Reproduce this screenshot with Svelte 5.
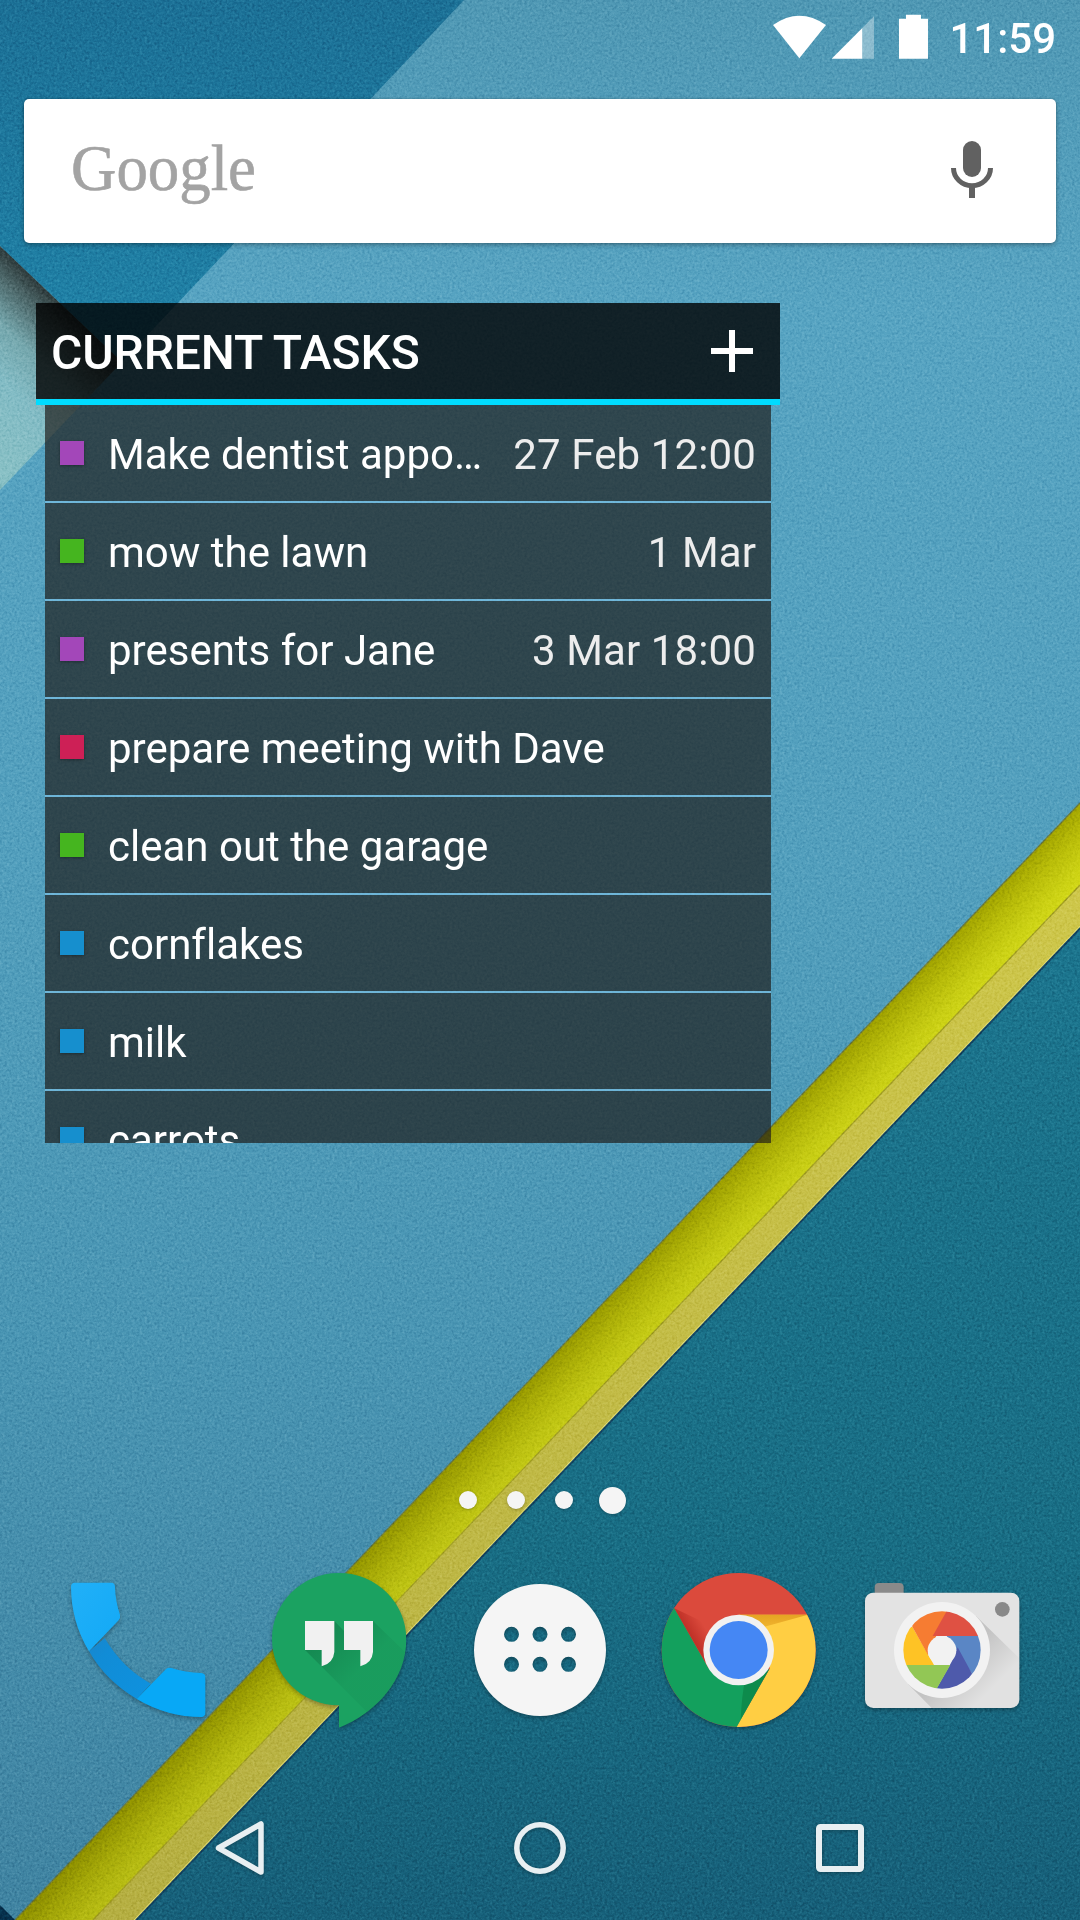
<script>
  const tasks = [
    { title: 'Make dentist appo…', due: '27 Feb 12:00', color: '#a347b9' },
    { title: 'mow the lawn', due: '1 Mar', color: '#45b51f' },
    { title: 'presents for Jane', due: '3 Mar 18:00', color: '#a347b9' },
    { title: 'prepare meeting with Dave', due: '', color: '#cd2056' },
    { title: 'clean out the garage', due: '', color: '#45b51f' },
    { title: 'cornflakes', due: '', color: '#168fce' },
    { title: 'milk', due: '', color: '#168fce' },
    { title: 'carrots', due: '', color: '#168fce' }
  ];
  const pages = [false, false, false, true];
</script>

<div class="phone">
  <svg class="wallpaper" viewBox="0 0 1080 1920" aria-hidden="true">
    <defs>
      <linearGradient id="sky" x1="0" y1="0" x2="0" y2="1920" gradientUnits="userSpaceOnUse">
        <stop offset="0" stop-color="#4f98b4" />
        <stop offset="0.16" stop-color="#57a4c2" />
        <stop offset="0.45" stop-color="#529fbd" />
        <stop offset="0.7" stop-color="#4995b3" />
        <stop offset="1" stop-color="#3f83a1" />
      </linearGradient>
      <linearGradient id="deep" x1="0" y1="0" x2="0" y2="362" gradientUnits="userSpaceOnUse">
        <stop offset="0" stop-color="#1b7096" />
        <stop offset="1" stop-color="#2083a8" />
      </linearGradient>
      <linearGradient id="pale" x1="61" y1="304" x2="-49" y2="420" gradientUnits="userSpaceOnUse">
        <stop offset="0" stop-color="#2e3b3c" />
        <stop offset="0.12" stop-color="#4b6567" />
        <stop offset="0.35" stop-color="#76a8ae" />
        <stop offset="0.6" stop-color="#83bcc5" />
        <stop offset="1" stop-color="#88c0c5" />
      </linearGradient>
      <linearGradient id="teal" x1="900" y1="1000" x2="900" y2="1920" gradientUnits="userSpaceOnUse">
        <stop offset="0" stop-color="#1b748d" />
        <stop offset="0.6" stop-color="#186d84" />
        <stop offset="1" stop-color="#165f79" />
      </linearGradient>
      <linearGradient id="band" x1="548" y1="1362" x2="588" y2="1400" gradientUnits="userSpaceOnUse">
        <stop offset="0" stop-color="#a2a400" />
        <stop offset="0.4" stop-color="#bbbf09" />
        <stop offset="0.8" stop-color="#cdd313" />
        <stop offset="1" stop-color="#d3d916" />
      </linearGradient>
      <linearGradient id="dim" x1="0" y1="800" x2="0" y2="1920" gradientUnits="userSpaceOnUse">
        <stop offset="0" stop-color="#000" stop-opacity="0" />
        <stop offset="1" stop-color="#000" stop-opacity="0.13" />
      </linearGradient>
      <filter id="paper" x="0" y="0" width="100%" height="100%" color-interpolation-filters="sRGB">
        <feTurbulence type="fractalNoise" baseFrequency="0.4" numOctaves="3" seed="4" />
        <feColorMatrix values="1 1 0 0 -0.5  1 1 0 0 -0.5  1 1 0 0 -0.5  0 0 0 0 1" />
      </filter>
    </defs>
    <rect width="1080" height="1920" fill="url(#sky)" />
    <path d="M0 0H464L122 362L0 246Z" fill="url(#deep)" />
    <path d="M0 246L122 362L0 490Z" fill="url(#pale)" />
    <path d="M1080 927V1920H135Z" fill="url(#teal)" />
    <path d="M1080 803V885L93 1920H15Z" fill="url(#band)" />
    <path d="M1080 885V927L135 1920H93Z" fill="#d0c94b" />
    <path d="M1080 803V927L135 1920H15Z" fill="url(#dim)" />
    <path d="M1080 803L15 1920" stroke="#6c7a3c" stroke-width="1.3" />
    <path d="M1080 885L93 1920" stroke="#a4a022" stroke-width="1.3" />
    <path d="M1080 926L134 1920" stroke="#e2d877" stroke-width="1" />
    <path d="M1080 928.500L136.500 1920" stroke="#123f5e" stroke-width="1.6" />
    <path d="M0 1905L15 1920H0Z" fill="#062f4c" />
    <rect class="grain" width="1080" height="1920" filter="url(#paper)" />
  </svg>

  <main class="home">
    <header class="status">
      <svg class="signals" viewBox="99 40 465 140" aria-hidden="true">
        <path d="M99 76Q178 20 258 76L178 176Z" fill="#fff" />
        <path d="M402 50V177H367V85Z" fill="#fff" fill-opacity=".35" />
        <path d="M367 85V177H275Z" fill="#fff" />
        <path d="M498 45H543V57H564V177H477V57H498Z" fill="#fff" />
      </svg>
      <span class="clock">11:59</span>
    </header>

    <section class="search">
      <svg class="logo" viewBox="0 0 190 80">
        <text x="0" y="52" textLength="185" lengthAdjust="spacingAndGlyphs">Google</text>
      </svg>
      <svg class="mic" viewBox="633 423 126 171" aria-label="Voice search">
        <rect x="669" y="423" width="54" height="108" rx="27" fill="#616161" />
        <path d="M640.500 504A55.500 53 0 0 0 751.500 504" fill="none" stroke="#616161" stroke-width="15" />
        <path d="M687 558H705V594H687Z" fill="#616161" />
      </svg>
    </section>

    <section class="widget">
      <div class="heading">
        <h1>CURRENT TASKS</h1>
        <svg class="plus" viewBox="0 0 42 42" aria-label="Add task">
          <path d="M21 0V42M0 21H42" stroke="#fff" stroke-width="6" />
        </svg>
      </div>
      <ul class="tasks">
        {#each tasks as task}
          <li>
            <span class="swatch" style="background:{task.color}"></span>
            <span class="title">{task.title}</span>
            {#if task.due}<span class="due">{task.due}</span>{/if}
          </li>
        {/each}
      </ul>
    </section>

    <div class="pages">
      {#each pages as current}
        <span class="page"><i class:current></i></span>
      {/each}
    </div>

    <nav class="dock">
      <!-- Phone -->
      <svg viewBox="-6 0 603 600">
        <defs>
          <linearGradient id="handle" x1="0" y1="0" x2="1" y2="1">
            <stop offset="0" stop-color="#1a86cb" />
            <stop offset=".25" stop-color="#118cd6" />
            <stop offset="1" stop-color="#0e92df" />
          </linearGradient>
          <linearGradient id="ear" x1="0" y1="0" x2="1" y2="1">
            <stop offset="0" stop-color="#21b0f8" />
            <stop offset="1" stop-color="#12a9f6" />
          </linearGradient>
        </defs>
        <path d="M147 304L194 264Q248 355 333 401L290 447Q196 391 147 304Z" fill="url(#handle)" />
        <path d="M105 98H214Q224 98 225 110Q226 152 240 194Q242 204 236 211L147 304Q93 214 93 110Q93 98 105 98Z" fill="url(#ear)" />
        <path d="M290 447L378 357Q385 351 394 354Q436 367 484 369Q496 370 496 382V488Q496 500 484 501Q381 501 290 447Z" fill="#08a8f6" />
      </svg>
      <!-- Hangouts -->
      <svg viewBox="597 0 603 600">
        <defs>
          <clipPath id="bubble"><path d="M897 69C1010 69 1099 159 1099 267C1099 390 1007 490 897 533V466C784 466 696 376 696 267C696 159 784 69 897 69Z" /></clipPath>
          <linearGradient id="cast" x1="860" y1="240" x2="970" y2="350" gradientUnits="userSpaceOnUse">
            <stop offset="0" stop-color="#064e2e" stop-opacity=".3" />
            <stop offset="1" stop-color="#064e2e" stop-opacity=".07" />
          </linearGradient>
        </defs>
        <g clip-path="url(#bubble)">
          <path d="M690 60H1110V540H690Z" fill="#1ba261" />
          <path d="M795 300L845 300L883 213L912 243L999 213L1120 330V540H1035Z" fill="url(#cast)" />
        </g>
        <path d="M795 213H883V306Q880 340 845 349V300H795ZM912 213H999V306Q996 340 961 349V300H912Z" fill="#f1f1f1" />
      </svg>
      <!-- All apps -->
      <svg viewBox="0 270 603 600">
        <path
          fill="#f5f5f5"
          fill-rule="evenodd"
          d="M102 570a198 198 0 1 0 396 0a198 198 0 1 0 -396 0ZM192 523a22.500 22.500 0 1 1 45 0a22.500 22.500 0 1 1 -45 0ZM277.500 523a22.500 22.500 0 1 1 45 0a22.500 22.500 0 1 1 -45 0ZM363 523a22.500 22.500 0 1 1 45 0a22.500 22.500 0 1 1 -45 0ZM192 613a22.500 22.500 0 1 1 45 0a22.500 22.500 0 1 1 -45 0ZM277.500 613a22.500 22.500 0 1 1 45 0a22.500 22.500 0 1 1 -45 0ZM363 613a22.500 22.500 0 1 1 45 0a22.500 22.500 0 1 1 -45 0Z"
        />
      </svg>
      <!-- Chrome -->
      <svg viewBox="603 270 603 600">
        <defs>
          <clipPath id="disc"><circle cx="896" cy="570" r="231" /></clipPath>
          <linearGradient id="redshade" x1="750" y1="540" x2="800" y2="510" gradientUnits="userSpaceOnUse">
            <stop offset="0" stop-color="#b3261e" stop-opacity=".8" />
            <stop offset="1" stop-color="#b3261e" stop-opacity="0" />
          </linearGradient>
          <linearGradient id="goldshade" x1="0" y1="464" x2="0" y2="502" gradientUnits="userSpaceOnUse">
            <stop offset="0" stop-color="#e5a323" />
            <stop offset="1" stop-color="#f0b52e" />
          </linearGradient>
        </defs>
        <g clip-path="url(#disc)">
          <rect x="660" y="330" width="480" height="480" fill="#db4a3c" />
          <path d="M896 464H1140V810H884L990 625Z" fill="#ffce43" />
          <path d="M896 464H1104L960 504Z" fill="url(#goldshade)" />
          <path d="M703 445L805 624L896 675L988 627L885 810H650V445Z" fill="#13a05d" />
          <path d="M915 660L988 627L902 778Q905 710 915 660Z" fill="#0b8043" fill-opacity=".65" />
          <path d="M703 445L797 608L792 550L820 500Z" fill="url(#redshade)" />
        </g>
        <circle cx="896" cy="570" r="106" fill="#f1f1f1" />
        <circle cx="896" cy="570" r="87" fill="#4587f4" />
      </svg>
      <!-- Camera -->
      <svg viewBox="6 -30 603 600">
        <defs>
          <linearGradient id="lensshade" x1="380" y1="280" x2="470" y2="370" gradientUnits="userSpaceOnUse">
            <stop offset="0" stop-color="#000" stop-opacity=".14" />
            <stop offset="1" stop-color="#000" stop-opacity=".01" />
          </linearGradient>
          <clipPath id="lens"><circle cx="306" cy="270" r="116" /></clipPath>
        </defs>
        <path d="M104 105V82Q104 69 117 69H178Q191 69 191 82V105Z" fill="#8a8a8a" />
        <rect x="75" y="98" width="463" height="346" rx="25" fill="#e3e3e3" />
        <path d="M408 168L538 295V419Q536 442 513 444H275L204 372Z" fill="url(#lensshade)" />
        <circle cx="487" cy="148" r="22" fill="#898989" />
        <circle cx="306" cy="270" r="144" fill="#f2f2f2" />
        <g clip-path="url(#lens)">
          <path d="M430 228H320L397 343L440 343Z" fill="#5a86c5" />
          <path d="M353 262L397 343V400H290V385L335 305Z" fill="#4e5aab" />
          <path d="M340 315H190V400H284L291 385L331 315Z" fill="#92c755" />
          <path d="M217 200L282 315H180V200Z" fill="#fec325" />
          <path d="M217 200L210 145H325L264 285Z" fill="#f67c32" />
          <path d="M322 150L278 228H430V150Z" fill="#df5143" />
        </g>
        <circle cx="306" cy="271" r="43" fill="#f2f2f2" />
      </svg>
    </nav>

    <footer class="nav">
      <svg viewBox="0 0 60 60" aria-label="Back">
        <path d="M51 6V54L8.500 30Z" fill="none" stroke="#e8eff2" stroke-width="5.500" stroke-linejoin="round" />
      </svg>
      <svg viewBox="0 0 60 60" aria-label="Home">
        <circle cx="30" cy="30" r="23.200" fill="none" stroke="#e8eff2" stroke-width="5.500" />
      </svg>
      <svg viewBox="0 0 60 60" aria-label="Recent apps">
        <rect x="9" y="9" width="42" height="42" rx="1.500" fill="none" stroke="#e8eff2" stroke-width="6" stroke-linejoin="round" />
      </svg>
    </footer>
  </main>
</div>

<style>
  :global(body) {
    margin: 0;
  }

  .phone {
    display: grid;
    width: 1080px;
    height: 1920px;
    overflow: hidden;
    font-family: Roboto, 'Liberation Sans', sans-serif;
    color: #fff;
  }

  .wallpaper,
  .home {
    grid-area: 1 / 1;
    width: 1080px;
    height: 1920px;
  }

  .grain {
    mix-blend-mode: soft-light;
    opacity: 0.3;
  }

  .home {
    display: flex;
    flex-direction: column;
    z-index: 1;
  }

  .home svg {
    display: block;
    flex: none;
  }

  .status {
    display: flex;
    justify-content: flex-end;
    align-items: flex-start;
    gap: 21px;
    box-sizing: border-box;
    height: 99px;
    padding: 13px 24px 0 0;
  }

  .signals {
    width: 155px;
    height: 46.670px;
  }

  .clock {
    font-size: 42px;
    line-height: 52px;
    font-weight: 500;
  }

  .search {
    display: flex;
    align-items: center;
    justify-content: space-between;
    box-sizing: border-box;
    height: 144px;
    margin: 0 24px;
    padding: 0 63px 0 47px;
    border-radius: 5px;
    background: #fff;
    box-shadow: 0 2px 5px rgba(0, 0, 0, 0.3), 0 0 2px rgba(0, 0, 0, 0.2);
  }

  .logo {
    width: 190px;
    height: 80px;
    margin-top: 14px;
    overflow: visible;
    font-family: 'Liberation Serif', serif;
    font-size: 66px;
    fill: #a3a3a3;
    stroke: #a3a3a3;
    stroke-width: 0.6;
  }

  .mic {
    width: 42px;
    height: 57px;
    margin-bottom: 4px;
  }

  .widget {
    display: flex;
    flex-direction: column;
    width: 744px;
    margin: 60px 0 0 36px;
  }

  .heading {
    display: flex;
    align-items: center;
    justify-content: space-between;
    height: 96px;
    padding: 0 27px 0 15px;
    background: rgba(0, 0, 0, 0.8);
    border-bottom: 6px solid #00dcff;
  }

  h1 {
    margin: 0;
    font-size: 48px;
    line-height: 56px;
    font-weight: 500;
    letter-spacing: -0.1px;
    padding-top: 4px;
  }

  .plus {
    width: 42px;
    height: 42px;
  }

  .tasks {
    height: 738px;
    margin: 0 9px;
    padding: 0;
    overflow: hidden;
    list-style: none;
  }

  li {
    display: flex;
    align-items: center;
    height: 96px;
    padding: 0 15px;
    background: rgba(29, 26, 24, 0.68);
    border-bottom: 2px solid rgba(120, 190, 225, 0.75);
    background-clip: padding-box;
    font-size: 42px;
    line-height: 50px;
    font-variant-ligatures: none;
  }

  .swatch {
    flex: none;
    width: 24px;
    height: 24px;
    margin: 0 24px 0 0;
    box-shadow: 0 1px 3px rgba(0, 0, 0, 0.35);
  }

  .title {
    flex: 1;
    white-space: nowrap;
    padding-top: 4px;
  }

  .due {
    flex: none;
    padding-top: 4px;
    letter-spacing: 0.12px;
    color: #ededed;
  }

  .pages {
    display: flex;
    justify-content: center;
    height: 28px;
    margin-top: 343px;
  }

  .page {
    display: flex;
    align-items: center;
    justify-content: center;
    width: 48px;
  }

  .page i {
    width: 18px;
    height: 18px;
    border-radius: 50%;
    background: #f5f5f5;
    box-shadow: 0 1px 3px rgba(0, 0, 0, 0.25);
  }

  .page i.current {
    width: 27px;
    height: 27px;
  }

  .dock {
    display: grid;
    grid-template-columns: repeat(5, 201px);
    height: 200px;
    margin: 36px 0 0 38px;
  }

  .dock svg {
    width: 201px;
    height: 200px;
    filter: drop-shadow(0 2px 2px rgba(0, 0, 0, 0.3));
  }

  .nav {
    display: grid;
    grid-template-columns: repeat(3, 300px);
    justify-content: center;
    align-items: center;
    justify-items: center;
    height: 144px;
    margin-top: 26px;
  }

  .nav svg {
    width: 60px;
    height: 60px;
    filter: drop-shadow(0 1px 2px rgba(0, 0, 0, 0.3));
  }
</style>
